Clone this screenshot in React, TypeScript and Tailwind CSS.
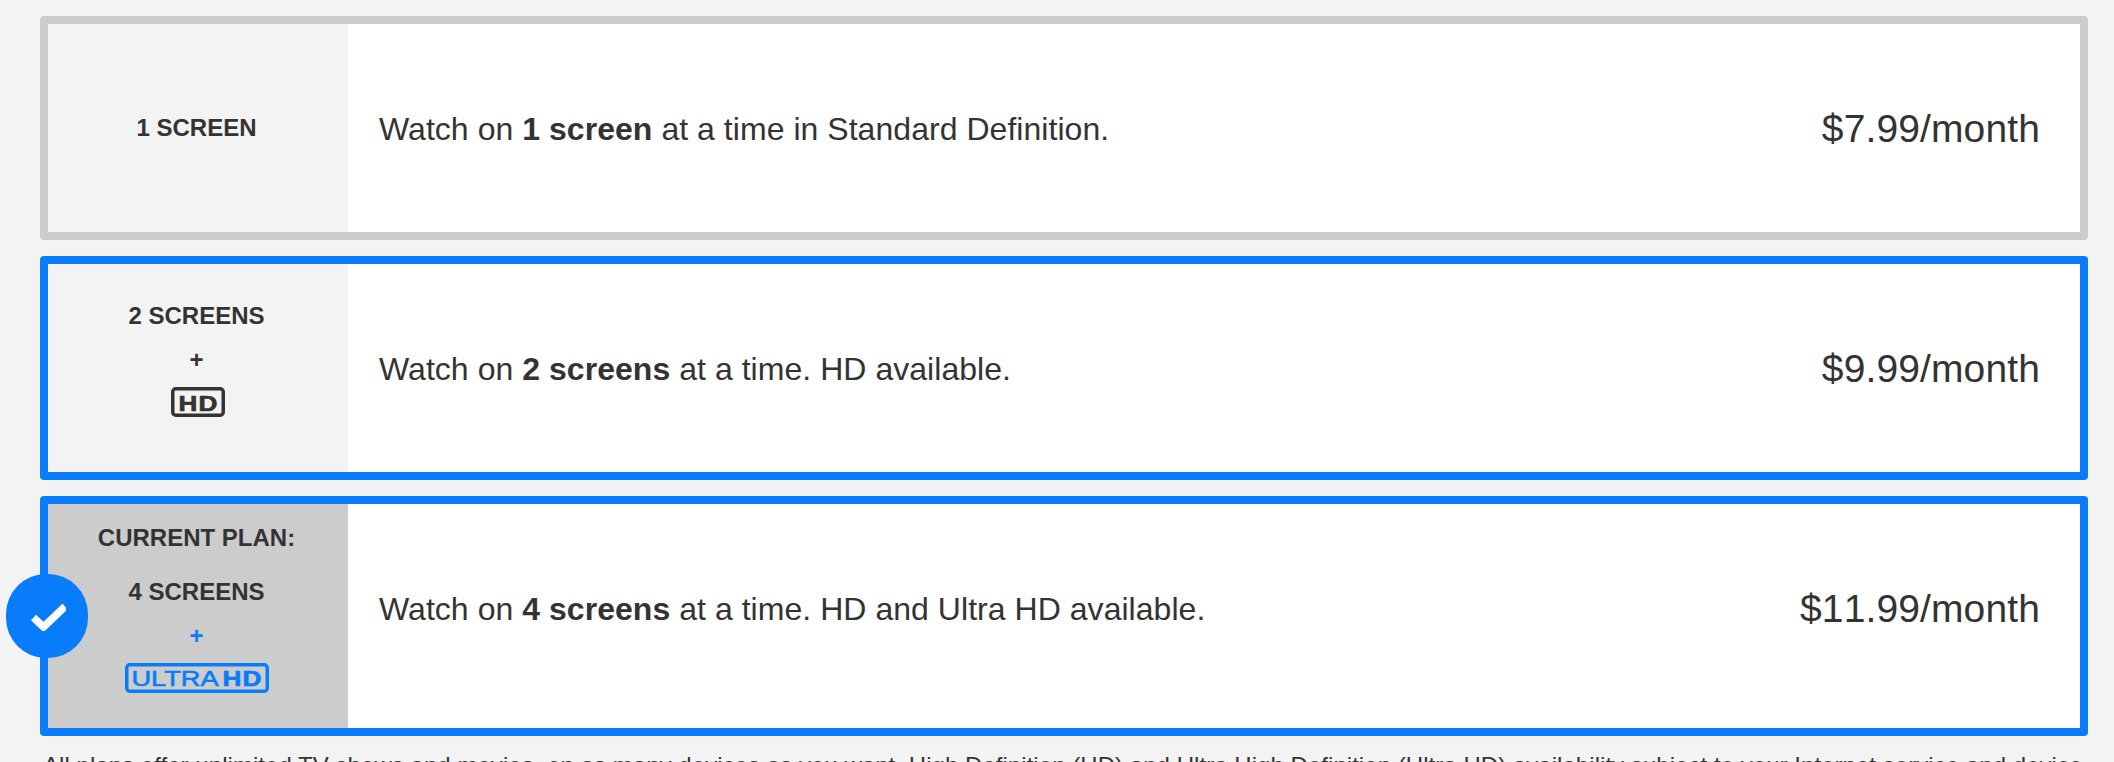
import { ReactNode } from 'react';
import clsx from 'clsx';

interface Plan {
  id: string;
  screens: string;
  badge?: 'hd' | 'uhd';
  description: ReactNode;
  price: string;
  highlighted?: boolean;
  current?: boolean;
}

const plans: Plan[] = [
  {
    id: 'basic',
    screens: '1 screen',
    description: <>Watch on <b>1 screen</b> at a time in Standard Definition.</>,
    price: '$7.99/month',
  },
  {
    id: 'standard',
    screens: '2 screens',
    badge: 'hd',
    description: <>Watch on <b>2 screens</b> at a time. HD available.</>,
    price: '$9.99/month',
    highlighted: true,
  },
  {
    id: 'premium',
    screens: '4 screens',
    badge: 'uhd',
    description: <>Watch on <b>4 screens</b> at a time. HD and Ultra HD available.</>,
    price: '$11.99/month',
    highlighted: true,
    current: true,
  },
];

function HdBadge() {
  return (
    <svg width="54" height="30" viewBox="0 0 54 30" fill="none" className="ml-0.5">
      <rect x="1.75" y="1.75" width="50.5" height="26.5" rx="3" stroke="currentColor" strokeWidth="3.5" />
      <text x="7.5" y="23.5" fontSize="22.5" fontWeight="700" letterSpacing="1" fill="currentColor" stroke="currentColor" strokeWidth="0.7" textLength="40" lengthAdjust="spacingAndGlyphs">HD</text>
    </svg>
  );
}

function UltraHdBadge() {
  return (
    <svg width="144" height="30" viewBox="0 0 144 30" fill="none">
      <rect x="1.75" y="1.75" width="140.5" height="26.5" rx="3" stroke="currentColor" strokeWidth="3.5" />
      <text x="6.5" y="23.3" fontSize="22.5" fontWeight="400" fill="currentColor" stroke="currentColor" strokeWidth="0.6" textLength="87" lengthAdjust="spacingAndGlyphs">ULTRA</text>
      <text x="97.5" y="23.3" fontSize="22.5" fontWeight="700" letterSpacing="1" fill="currentColor" stroke="currentColor" strokeWidth="0.7" textLength="40" lengthAdjust="spacingAndGlyphs">HD</text>
    </svg>
  );
}

function SelectedMark() {
  return (
    <div className="absolute top-1/2 -left-[42px] flex h-[84px] w-[82px] -translate-y-1/2 items-center justify-center rounded-[40px] bg-[#087cfa]">
      <svg width="38" height="32" viewBox="0 0 38 32" fill="none">
        <path d="M5.5 17.5L15.5 27L37 6.5" stroke="white" strokeWidth="7.5" strokeLinejoin="round" />
      </svg>
    </div>
  );
}

function PlanRow({ plan }: { plan: Plan }) {
  return (
    <li
      className={clsx(
        'relative flex rounded-[4px] border-8 bg-white',
        plan.highlighted ? 'border-[#087cfa]' : 'border-[#cccccc]',
        plan.current ? 'h-60' : 'h-56'
      )}
    >
      <div
        className={clsx(
          'flex w-[300px] flex-col items-center pr-[3px] text-2xl font-bold uppercase',
          plan.current ? 'bg-[#cccccc] pt-[18px]' : 'bg-[#f3f3f3]',
          !plan.current && (plan.badge ? 'pt-9' : 'justify-center')
        )}
      >
        {plan.current && <div className="mb-[22px]">Current plan:</div>}
        <div>{plan.screens}</div>
        {plan.badge && (
          <div className={clsx('flex flex-col items-center', plan.badge === 'uhd' && 'text-[#087cfa]')}>
            <div className="mt-3">+</div>
            <div className="mt-[11px]">{plan.badge === 'hd' ? <HdBadge /> : <UltraHdBadge />}</div>
          </div>
        )}
      </div>
      <div className="flex h-52 flex-1 items-center justify-between pt-0.5 pr-10 pl-[31px]">
        <p className="text-[32px] tracking-[0.04px]">{plan.description}</p>
        <p className="text-[39px] tracking-[0.12px] [font-kerning:none]">{plan.price}</p>
      </div>
      {plan.current && <SelectedMark />}
    </li>
  );
}

export default function App() {
  return (
    <main className="h-[762px] overflow-hidden bg-[#f3f3f3] pt-4 pr-[26px] pl-10 font-['Liberation_Sans',Arial,sans-serif] text-[#333333]">
      <ul className="flex flex-col gap-4">
        {plans.map((plan) => (
          <PlanRow key={plan.id} plan={plan} />
        ))}
      </ul>
      <p className="mt-3.5 pl-[3px] text-[24px] leading-8 tracking-[0.045px] whitespace-nowrap">
        All plans offer unlimited TV shows and movies, on as many devices as you want. High Definition (HD) and Ultra High Definition (Ultra HD) availability subject to your Internet service and device
      </p>
    </main>
  );
}
